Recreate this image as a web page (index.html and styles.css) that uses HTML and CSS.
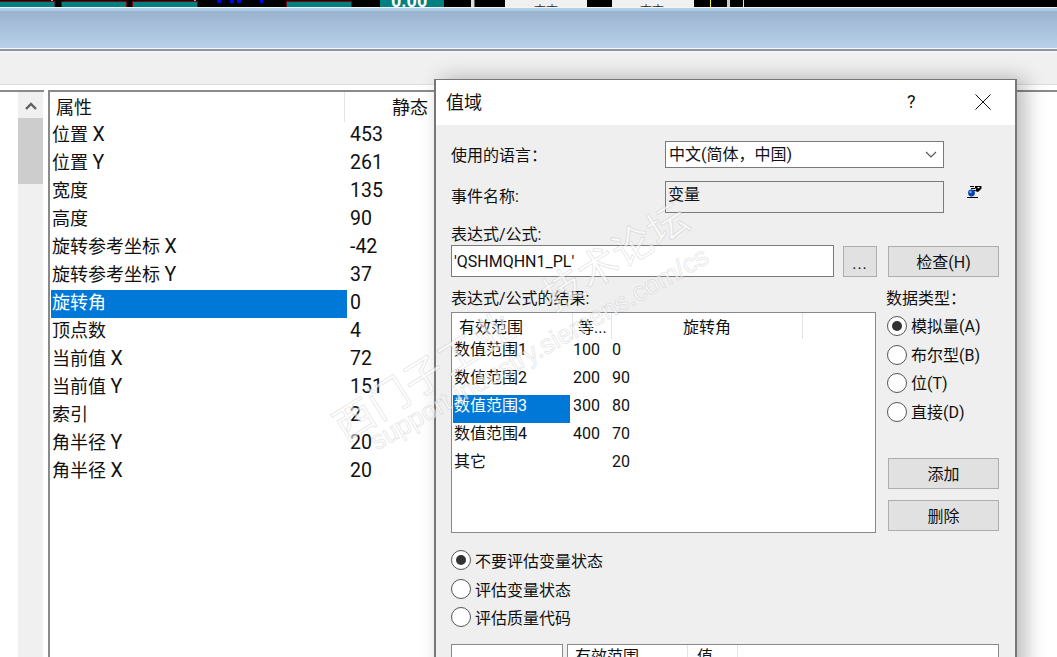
FILE: index.html
```html
<!DOCTYPE html>
<html lang="zh-CN">
<head>
<meta charset="utf-8">
<title>值域</title>
<link rel="stylesheet" href="styles.css">
</head>
<body>
<div class="screen">
  <svg class="strip" width="1057" height="7" viewBox="0 0 1057 7">
    <rect width="1057" height="7" fill="#000"/>
    <g fill="#008080" stroke="#7a0010" stroke-width="1">
      <rect x="-2" y="1.5" width="57" height="7"/>
      <rect x="61.5" y="1.5" width="65" height="7"/>
      <rect x="132.5" y="1.5" width="65" height="7"/>
      <rect x="286.5" y="1.5" width="65" height="7"/>
    </g>
    <rect x="380" y="0" width="64" height="7" fill="#008080"/>
    <text class="strip-num" x="391" y="7">0.00</text>
    <g fill="#0000ff">
      <rect x="217" y="0" width="4" height="3"/>
      <rect x="230" y="0" width="4" height="3"/>
      <rect x="237" y="0" width="4" height="3"/>
      <rect x="260" y="0" width="3" height="3"/>
    </g>
    <rect x="51" y="0" width="2" height="1" fill="#aaa"/>
    <rect x="194" y="0" width="2" height="1" fill="#aaa"/>
    <rect x="471" y="0" width="3" height="7" fill="#ddd"/>
    <rect x="474" y="0" width="1" height="7" fill="#665"/>
    <rect x="505" y="0" width="82" height="7" fill="#f0f0f0"/>
    <rect x="612" y="0" width="82" height="7" fill="#f0f0f0"/>
    <text class="strip-txt" x="534" y="15">查查</text>
    <text class="strip-txt" x="640" y="15">查查</text>
    <rect x="710" y="0" width="1" height="7" fill="#ffff00"/>
    <rect x="727" y="0" width="3" height="7" fill="#ccc"/>
    <rect x="743" y="0" width="1" height="7" fill="#ffff00"/>
  </svg>
  <div class="white-line"></div>
  <div class="sky-line"></div>
  <div class="ribbon"></div>
  <div class="ribbon-edge"></div>
  <div class="toolbar"></div>

  <div class="workspace">
    <div class="tree-pane">
      <div class="tree-blank"></div>
      <div class="scrollbar">
        <svg class="chevron" width="12" height="8" viewBox="0 0 12 8"><path d="M1 7 L6 2 L11 7" fill="none" stroke="#606060" stroke-width="2.4"/></svg>
        <div class="thumb"></div>
      </div>
    </div>
    <div class="prop-pane">
      <div class="prop-head">
        <span class="prop-head-name">属性</span>
        <span class="prop-head-static">静态</span>
      </div>
      <div class="prop-row"><span class="prop-name">位置 <i>X</i></span><span class="prop-val">453</span></div>
      <div class="prop-row"><span class="prop-name">位置 <i>Y</i></span><span class="prop-val">261</span></div>
      <div class="prop-row"><span class="prop-name">宽度</span><span class="prop-val">135</span></div>
      <div class="prop-row"><span class="prop-name">高度</span><span class="prop-val">90</span></div>
      <div class="prop-row"><span class="prop-name">旋转参考坐标 <i>X</i></span><span class="prop-val">-42</span></div>
      <div class="prop-row"><span class="prop-name">旋转参考坐标 <i>Y</i></span><span class="prop-val">37</span></div>
      <div class="prop-row selected"><span class="prop-name">旋转角</span><span class="prop-val">0</span></div>
      <div class="prop-row"><span class="prop-name">顶点数</span><span class="prop-val">4</span></div>
      <div class="prop-row"><span class="prop-name">当前值 <i>X</i></span><span class="prop-val">72</span></div>
      <div class="prop-row"><span class="prop-name">当前值 <i>Y</i></span><span class="prop-val">151</span></div>
      <div class="prop-row"><span class="prop-name">索引</span><span class="prop-val">2</span></div>
      <div class="prop-row"><span class="prop-name">角半径 <i>Y</i></span><span class="prop-val">20</span></div>
      <div class="prop-row"><span class="prop-name">角半径 <i>X</i></span><span class="prop-val">20</span></div>
    </div>
  </div>

  <div class="dialog">
    <div class="titlebar">
      <span class="title">值域</span>
      <span class="help">?</span>
      <svg class="close" width="16" height="16" viewBox="0 0 16 16"><path d="M0.5 0.5 L15.5 15.5 M15.5 0.5 L0.5 15.5" stroke="#111" stroke-width="1" fill="none"/></svg>
    </div>
    <div class="body">
      <div class="row row-lang">
        <span class="label">使用的语言：</span>
        <div class="combo">
          <span class="combo-text">中文(简体，中国)</span>
          <svg width="12" height="7" viewBox="0 0 12 7"><path d="M1 1 L6 6 L11 1" fill="none" stroke="#555" stroke-width="1.1"/></svg>
        </div>
      </div>
      <div class="row row-event">
        <span class="label">事件名称:</span>
        <div class="readonly">变量</div>
        <svg class="tag-icon" width="15" height="13" viewBox="0 0 15 13">
          <path d="M8 1 H14.5 V3.5 L11 7 L8 6 L9.5 3.5 H8 Z" fill="#000"/>
          <rect x="10.5" y="2" width="2" height="1.2" fill="#fff"/>
          <path d="M3 1.5 H7 M4 3.5 H8 M5 5.5 H8" stroke="#000" stroke-width="1"/>
          <circle cx="4.5" cy="8" r="3.4" fill="#0a3fb0"/>
          <circle cx="3.5" cy="7" r="1.2" fill="#49c7e8"/>
          <rect x="0" y="12" width="11" height="1" fill="#000"/>
        </svg>
      </div>
      <div class="expr-label">表达式/公式:</div>
      <div class="row row-expr">
        <div class="input">'QSHMQHN1_PL'</div>
        <div class="btn btn-dots">...</div>
        <div class="btn btn-check">检查(H)</div>
      </div>
      <div class="results">
        <div class="results-left">
          <div class="results-label">表达式/公式的结果:</div>
          <div class="table">
            <div class="thead">
              <span class="th th-range">有效范围</span>
              <span class="th th-eq">等...</span>
              <span class="th th-rot">旋转角</span>
              <span class="th"></span>
            </div>
            <div class="tr"><span class="td">数值范围1</span><span class="td">100</span><span class="td">0</span></div>
            <div class="tr"><span class="td">数值范围2</span><span class="td">200</span><span class="td">90</span></div>
            <div class="tr"><span class="td td-selected">数值范围3</span><span class="td">300</span><span class="td">80</span></div>
            <div class="tr"><span class="td">数值范围4</span><span class="td">400</span><span class="td">70</span></div>
            <div class="tr"><span class="td">其它</span><span class="td"></span><span class="td">20</span></div>
          </div>
        </div>
        <div class="results-right">
          <div class="results-label type-label">数据类型：</div>
          <div class="type-radios">
            <div class="radio-row"><span class="radio on"></span><span class="radio-text">模拟量(A)</span></div>
            <div class="radio-row"><span class="radio"></span><span class="radio-text">布尔型(B)</span></div>
            <div class="radio-row"><span class="radio"></span><span class="radio-text">位(T)</span></div>
            <div class="radio-row"><span class="radio"></span><span class="radio-text">直接(D)</span></div>
          </div>
          <div class="btn btn-wide btn-add">添加</div>
          <div class="btn btn-wide btn-del">删除</div>
        </div>
      </div>
      <div class="eval-radios">
        <div class="radio-row"><span class="radio on"></span><span>不要评估变量状态</span></div>
        <div class="radio-row"><span class="radio"></span><span>评估变量状态</span></div>
        <div class="radio-row"><span class="radio"></span><span>评估质量代码</span></div>
      </div>
      <div class="bottom">
        <div class="bottom-list"></div>
        <div class="bottom-table">
          <span class="bth bth-range">有效范围</span>
          <span class="bth bth-val">值</span>
          <span class="bth"></span>
        </div>
      </div>
    </div>
  </div>

  <div class="wm wm-cn">西门子工业　技术论坛</div>
  <div class="wm wm-en">support.industry.siemens.com/cs</div>
</div>
</body>
</html>
```
FILE: styles.css
```css
* { box-sizing: border-box; }
html, body { margin: 0; padding: 0; background: #fff; }
.screen {
  position: relative;
  width: 1057px;
  height: 657px;
  overflow: hidden;
  font-family: Roboto, "Noto Sans CJK SC", sans-serif;
  font-size: 16px;
  color: #111;
  background: #fff;
}
.strip { display: block; }
.strip-num { font: 700 18px Roboto, sans-serif; fill: #fff; }
.strip-txt { font: 12px "Noto Sans CJK SC", sans-serif; fill: #333; }
.white-line { height: 1px; background: #f4f4f4; }
.sky-line { height: 4px; background: linear-gradient(#b4d2ea, #a9c8e2 75%, #8aa5bd); }
.ribbon { height: 36px; background: linear-gradient(#9bb3d0, #b8d1e9); }
.ribbon-edge { height: 5px; background: linear-gradient(#f6f6f6 0, #f6f6f6 20%, #8e95a3 20%, #8e95a3 60%, #f6f1f8 60%); }
.toolbar { height: 32px; background: #f0f0f0; border-bottom: 1px solid #dedede; }

.workspace { display: flex; height: 572px; padding-top: 5px; }
.tree-pane { width: 44px; display: flex; border-top: 2px solid #8a8a8a; }
.tree-blank { width: 18px; background: #fff; }
.scrollbar { width: 25px; background: #f0f0f0; display: flex; flex-direction: column; align-items: center; }
.chevron { margin-top: 10px; }
.thumb { width: 25px; height: 66px; margin-top: 8px; background: #cdcdcd; }
.prop-pane {
  margin-left: 4px;
  flex: 1;
  border-top: 2px solid #8a8a8a;
  border-left: 2px solid #8a8a8a;
  font-size: 18px;
  line-height: 26px;
}
.prop-head { display: flex; height: 30px; }
.prop-head-name { width: 295px; padding: 3px 0 0 6px; border-right: 1px solid #e4e4e4; }
.prop-head-static { margin-left: 47px; padding-top: 3px; }
.prop-row { display: flex; height: 28px; margin-left: 1px; }
.prop-name { width: 296px; padding-left: 1px; margin-right: 3px; }
.prop-name i, .prop-val { font-style: normal; font-size: 19.5px; }
.prop-row.selected .prop-name { background: #0078d7; color: #fff; }

.dialog {
  position: absolute;
  left: 434px;
  top: 79px;
  width: 583px;
  height: 600px;
  border: 2px solid #777;
  border-width: 1px 2px 1px 2px;
  background: #efefef;
  box-shadow: 8px 0 20px rgba(0,0,0,.28);
}
.titlebar { height: 45px; background: #fff; display: flex; align-items: center; padding: 0 0 2px 10px; }
.title { font-size: 18px; width: 461px; margin-bottom: 2px; }
.help { font-size: 18px; width: 68px; }
.body { padding: 16px 0 0 15px; }
.row { display: flex; }
.label { width: 214px; }
.row-lang { height: 27px; align-items: center; }
.row-lang .label { margin-bottom: 2px; }
.combo {
  width: 279px; height: 27px;
  display: flex; align-items: center; justify-content: space-between;
  padding: 0 6px 0 3px;
  background: #fff; border: 1px solid #7a7a7a;
}
.combo-text { margin-bottom: 4px; }
.row-event { height: 32px; margin-top: 13px; }
.row-event .label { padding-top: 2px; }
.readonly { width: 279px; height: 32px; padding: 0 2px; line-height: 26px; border: 1px solid #7a7a7a; }
.tag-icon { margin: 4px 0 0 23px; }
.expr-label { margin-top: 11px; height: 21px; line-height: 22px; }
.row-expr { height: 32px; }
.input { width: 383px; height: 32px; padding: 2px 2px 0; background: #fff; border: 1px solid #7a7a7a; line-height: 28px; }
.btn {
  background: #e1e1e1;
  border: 1px solid #adadad;
  display: flex; align-items: center; justify-content: center;
  padding-bottom: 2px;
}
.btn-dots { width: 34px; height: 31px; margin: 1px 0 0 9px; letter-spacing: 1px; padding: 3px 0 0; }
.btn-check { width: 111px; height: 31px; margin: 1px 0 0 11px; }
.results { display: flex; margin-top: 11px; }
.results-left { width: 436px; }
.results-label { height: 24px; line-height: 22px; }
.type-label { margin-left: -1px; }
.table { width: 425px; height: 221px; background: #fff; border: 1px solid #868a8e; }
.thead { display: grid; grid-template-columns: 121px 39px 191px 1fr; height: 26px; }
.th { border-right: 1px solid #e4e4e4; height: 26px; line-height: 29px; }
.th:last-child { border-right: 0; }
.th-range { padding-left: 7px; }
.th-eq { padding-left: 5px; }
.th-rot { text-align: center; }
.tr { display: grid; grid-template-columns: 121px 39px 1fr; height: 28px; line-height: 22px; }
.td:first-child { padding-left: 1px; margin: 0 3px 0 1px; height: 28px; }
.td-selected { background: #0078d7; color: #fff; }
.results-right { flex: 1; }
.type-radios { display: flex; flex-direction: column; }
.radio-row { display: flex; align-items: center; gap: 4px; height: 28.5px; }
.radio-text { margin-bottom: 2px; }
.radio {
  display: flex; align-items: center; justify-content: center;
  width: 20px; height: 20px;
  border: 1.5px solid #555; border-radius: 50%; background: #fff;
}
.radio.on::after { content: ""; width: 10px; height: 10px; border-radius: 50%; background: #333; }
.btn-wide { width: 111px; height: 31px; margin-left: 1px; }
.btn-add { margin-top: 32px; }
.btn-del { margin-top: 11px; }
.eval-radios { margin-top: 13px; }
.bottom { display: flex; margin-top: 12px; gap: 4px; }
.bottom-list { width: 112px; height: 40px; background: #fff; border: 1px solid #868a8e; }
.bottom-table {
  width: 432px; height: 40px; background: #fff;
  border: 1px solid #868a8e;
  display: grid; grid-template-columns: 120px 50px 1fr;
  line-height: 20px;
}
.bth { border-right: 1px solid #e4e4e4; padding-top: 2px; }
.bth:last-child { border-right: 0; }
.bth-range { padding-left: 7px; }
.bth-val { padding-left: 9px; }

.wm {
  position: absolute;
  white-space: nowrap;
  transform-origin: 0 50%;
  pointer-events: none;
  color: rgba(255,255,255,.6);
  -webkit-text-stroke: 1px rgba(150,150,150,.22);
}
.wm-cn {
  left: 336px; top: 408px;
  font: 40px/40px "Noto Sans CJK SC", sans-serif;
  letter-spacing: 1px;
  transform: rotate(-32deg);
}
.wm-en {
  left: 372px; top: 430px;
  font: 26.5px/26px "Liberation Sans", sans-serif;
  transform: rotate(-29.5deg);
}
```
